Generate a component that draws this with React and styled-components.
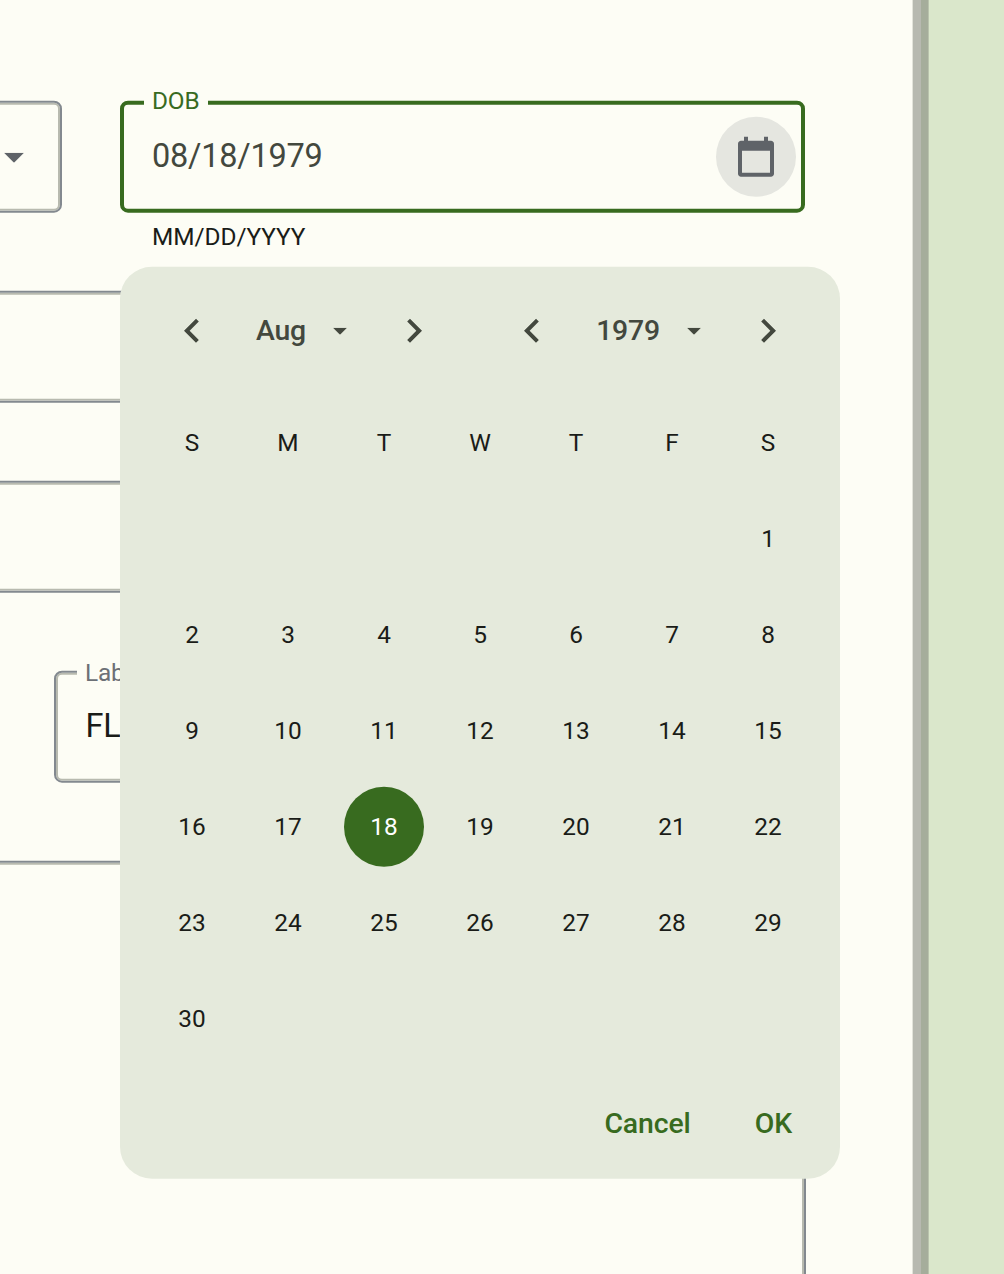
import React from "react";
import styled, { createGlobalStyle, css } from "styled-components";

const GlobalStyle = createGlobalStyle`
  * { box-sizing: border-box; }
  body { margin: 0; background: #fdfdf5; font-family: Roboto, "Liberation Sans", sans-serif; color: #1a1c18; }
  button { font: inherit; color: inherit; border: 0; padding: 0; background: none; }
`;

const Page = styled.div`
  display: grid;
  grid-template-columns: 912px 17px 1fr;
  width: 1004px;
  height: 1274px;
  overflow: hidden;
`;

const Content = styled.main`
  position: relative;
  height: 1274px;
  overflow: hidden;
  background: #fdfdf5;
`;

const Form = styled.form`
  position: relative;
  display: flex;
  flex-direction: column;
  gap: 78px;
  padding-top: 101px;
  transform: translateY(-0.3px);
`;

const Divider = styled.div`
  background: linear-gradient(to right, #e2e3da 1px, #b7b9b0 1px 9px, #a5ad9b 9px 16px, #b9c3ad 16px);
`;

const SidePanel = styled.aside`
  background: #dae7cb;
`;

const Row = styled.div`
  display: flex;
  flex: none;
  align-items: flex-start;
  gap: 58px;
  margin-left: ${({ $indent = -10 }) => $indent}px;
  width: ${({ $width = 816 }) => $width}px;
  height: 112px;
`;

const Field = styled.div`
  position: relative;
  display: flex;
  align-items: center;
  flex: ${({ $width }) => ($width ? "none" : "1")};
  width: ${({ $width }) => ($width ? $width + "px" : "auto")};
  height: ${({ $tall }) => ($tall ? 440 : 112)}px;
  padding: 0 9px 0 30px;
  border: 2px solid #83898f;
  border-radius: 8px;
  box-shadow: inset 0 0 0 2px #b8baaf;
  ${({ $active }) => $active && css`
    padding-left: 28px;
    padding-right: 5px;
    border: 4px solid #386b1f;
    box-shadow: none;
  `}
`;

const Label = styled.span`
  position: absolute;
  top: ${({ $active }) => ($active ? -18 : -14)}px;
  left: ${({ $active }) => ($active ? 20 : 21.5)}px;
  padding: 0 9px 0 8px;
  background: #fdfdf5;
  color: ${({ $active }) => ($active ? "#386b1f" : "#6c7076")};
  font-size: 24.4px;
  line-height: 28px;
  letter-spacing: -0.2px;
`;

const Value = styled.span`
  flex: 1;
  padding-bottom: ${({ $date }) => ($date ? 3 : 2)}px;
  font-size: 32.5px;
  line-height: 40px;
  letter-spacing: ${({ $date }) => ($date ? "-0.25px" : "-0.2px")};
  color: ${({ $date }) => ($date ? "#43483e" : "#1a1c18")};
`;

const FieldColumn = styled.div`
  display: flex;
  flex-direction: column;
  width: 685px;
`;

const HelperText = styled.span`
  padding: 8px 32px 0;
  font-size: 24.4px;
  line-height: 32px;
  letter-spacing: -0.05px;
`;

const IconButton = styled.button`
  display: grid;
  place-items: center;
  width: 80px;
  height: 80px;
  border-radius: 50%;
  background: #e5e6e0;
  color: #5f6368;
`;

const SelectArrow = styled.svg`
  display: block;
  width: ${({ $size }) => $size}px;
  height: ${({ $size }) => $size / 2}px;
  fill: currentColor;
`;

const SelectEnd = styled.div`
  display: flex;
  flex: 1;
  justify-content: flex-end;
  padding: 1px 27px 0 0;
  color: #5f6368;
`;

const SelectField = styled(Field)`
  padding-left: 0;
`;

const Picker = styled.section`
  position: absolute;
  z-index: 2;
  top: 267px;
  left: 120px;
  width: 720px;
  height: 912px;
  padding: 24px;
  display: flex;
  flex-direction: column;
  border-radius: 32px;
  background: #e5eadc;
  transform: translateY(-0.3px);
`;

const PickerHeader = styled.header`
  display: flex;
  justify-content: space-between;
  height: 80px;
`;

const Stepper = styled.div`
  display: flex;
  align-items: center;
  justify-content: space-between;
  width: ${({ $width }) => $width}px;
  color: #43483e;
`;

const StepButton = styled.button`
  display: grid;
  place-items: center;
  width: 96px;
  height: 80px;
`;

const PeriodButton = styled.button`
  display: flex;
  align-items: center;
  gap: 27px;
  margin-right: 3px;
  font-size: 28.4px;
  line-height: 40px;
  font-weight: 500;
  letter-spacing: -0.2px;
`;

const Grid = styled.div`
  display: grid;
  grid-template-columns: repeat(7, 96px);
  grid-auto-rows: 96px;
  margin-top: 24px;
`;

const Cell = styled.div`
  display: grid;
  place-items: center;
  font-size: 24.4px;
  line-height: 32px;
`;

const Day = styled.button`
  width: 80px;
  height: 80px;
  border-radius: 50%;
  background: ${({ $selected }) => ($selected ? "#386b1f" : "transparent")};
  color: ${({ $selected }) => ($selected ? "#fff" : "inherit")};
`;

const Actions = styled.footer`
  display: flex;
  justify-content: flex-end;
  gap: 64px;
  padding: 37px 24px 0 0;
`;

const ActionButton = styled.button`
  height: 40px;
  color: #386b1f;
  font-size: 28.4px;
  line-height: 40px;
  font-weight: 500;
  letter-spacing: -0.1px;
`;

const Arrow = ({ size }) => (
  <SelectArrow $size={size} viewBox="0 0 20 10"><path d="M0 0h20L10 10z" /></SelectArrow>
);

const Chevron = ({ next }) => (
  <svg width="48" height="48" viewBox="0 0 24 24" fill="currentColor">
    <path d={next
      ? "M10 6 8.59 7.41 13.17 12l-4.58 4.59L10 18l6-6z"
      : "M15.41 7.41 14 6l-6 6 6 6 1.41-1.41L10.83 12z"} />
  </svg>
);

const CalendarIcon = () => (
  <svg width="48" height="48" viewBox="0 0 24 24" fill="currentColor">
    <path d="M19.5 4H18V2h-2v2H8V2H6v2H4.5C3.7 4 3 4.7 3 5.5v15c0 .8.7 1.5 1.5 1.5h15c.8 0 1.5-.7 1.5-1.5v-15c0-.8-.7-1.5-1.5-1.5zM19 20H5V9h14v11z" />
  </svg>
);

const weekdays = ["S", "M", "T", "W", "T", "F", "S"];
const leadingBlanks = 6;
const days = Array.from({ length: 30 }, (_, i) => i + 1);

export default function App() {
  return (
    <>
      <GlobalStyle />
      <Page>
        <Content>
          <Form>
            <Row $width={815}>
              <SelectField $width={72}>
                <SelectEnd><Arrow size={20} /></SelectEnd>
              </SelectField>
              <FieldColumn>
                <Field $active $width={685}>
                  <Label $active>DOB</Label>
                  <Value $date>08/18/1979</Value>
                  <IconButton type="button" aria-label="Choose date"><CalendarIcon /></IconButton>
                </Field>
                <HelperText>MM/DD/YYYY</HelperText>
              </FieldColumn>
            </Row>
            <Row><Field /></Row>
            <Row><Field /></Row>
            <Row $indent={53.6} $width={752}>
              <Field>
                <Label>Label</Label>
                <Value>FL</Value>
              </Field>
            </Row>
            <Row><Field $tall /></Row>
          </Form>

          <Picker aria-label="Date picker">
            <PickerHeader>
              <Stepper $width={318}>
                <StepButton aria-label="Previous month"><Chevron /></StepButton>
                <PeriodButton>Aug <Arrow size={14} /></PeriodButton>
                <StepButton aria-label="Next month"><Chevron next /></StepButton>
              </Stepper>
              <Stepper $width={332}>
                <StepButton aria-label="Previous year"><Chevron /></StepButton>
                <PeriodButton>1979 <Arrow size={14} /></PeriodButton>
                <StepButton aria-label="Next year"><Chevron next /></StepButton>
              </Stepper>
            </PickerHeader>
            <Grid>
              {weekdays.map((d, i) => <Cell key={"w" + i}>{d}</Cell>)}
              {Array.from({ length: leadingBlanks }, (_, i) => <Cell key={"b" + i} />)}
              {days.map((d) => (
                <Cell key={d}><Day $selected={d === 18}>{d}</Day></Cell>
              ))}
            </Grid>
            <Actions>
              <ActionButton>Cancel</ActionButton>
              <ActionButton>OK</ActionButton>
            </Actions>
          </Picker>
        </Content>
        <Divider />
        <SidePanel />
      </Page>
    </>
  );
}
